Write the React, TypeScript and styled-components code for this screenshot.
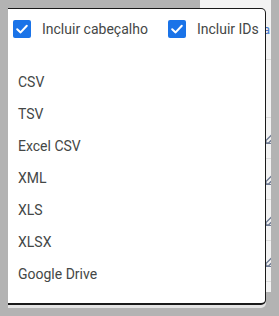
import styled, { createGlobalStyle } from 'styled-components'

const formats = ['CSV', 'TSV', 'Excel CSV', 'XML', 'XLS', 'XLSX', 'Google Drive']

const GlobalStyle = createGlobalStyle`
  * { box-sizing: border-box; }
  body {
    margin: 0;
    padding: 0;
    background: #b3b3b3;
    font-family: Roboto, "Liberation Sans", Arial, sans-serif;
  }
`

function CheckBox() {
  return (
    <Box>
      <svg width="14" height="14" viewBox="0 0 14 14">
        <path d="M2.2 7.2 L5.6 10.4 L11.8 3.8" fill="none" stroke="#fff" strokeWidth="2" strokeLinecap="round" strokeLinejoin="round" />
      </svg>
    </Box>
  )
}

function EditIcon() {
  return (
    <svg width="12" height="12" viewBox="0 0 12 12">
      <path d="M1 11 L1 8.5 L8 1.5 L10.5 4 L3.5 11 Z" fill="none" stroke="#6e7a92" strokeWidth="1.3" />
      <path d="M0.5 11.5 H11.5" stroke="#6e7a92" strokeWidth="1" />
    </svg>
  )
}

function App() {
  return (
    <Page>
      <GlobalStyle />

      {/* table behind the menu, only a thin strip of it shows */}
      <Sheet>
        <SheetHead>
          <HeadLink>a</HeadLink>
        </SheetHead>
        <SheetRow $tall />
        {[0, 1, 2, 3].map((i) => (
          <SheetRow key={i}>
            <EditIcon />
          </SheetRow>
        ))}
      </Sheet>

      <Menu>
        <Header>
          <Option>
            <CheckBox />
            <span>Incluir cabeçalho</span>
          </Option>
          <Option>
            <CheckBox />
            <span>Incluir IDs</span>
          </Option>
        </Header>

        <List>
          {formats.map((f) => (
            <Item key={f}>{f}</Item>
          ))}
        </List>
      </Menu>
    </Page>
  )
}

const Page = styled.div`
  position: relative;
  width: 279px;
  height: 316px;
  overflow: hidden;
  background: #b3b3b3;
`

const Sheet = styled.div`
  margin-left: 200px;
  width: 71px;
  height: 292px;
  background: #f3f3f3;
  overflow: hidden;
  display: flex;
  flex-direction: column;
`

const SheetHead = styled.div`
  height: 60px;
  border-bottom: 1px solid #dcdcdc;
  display: flex;
  justify-content: flex-end;
  padding-top: 22px;
  padding-right: 1px;
`

const HeadLink = styled.span`
  font-size: 13px;
  color: #4a78c8;
`

const SheetRow = styled.div<{ $tall?: boolean }>`
  height: ${(p) => (p.$tall ? '58px' : '41px')};
  flex-shrink: 0;
  border-bottom: 1px solid #dcdcdc;
  display: flex;
  align-items: center;
  justify-content: flex-end;
  margin-right: -6px;
`

const Menu = styled.div`
  position: absolute;
  left: 8px;
  top: 8px;
  width: 258px;
  height: 297px;
  background: #fff;
  border-top: 1px solid #1a1a1a;
  border-right: 1.5px solid #1a1a1a;
  border-bottom: 2px solid #1a1a1a;
  border-radius: 0 5px 5px 0;
  box-shadow: 0 3px 0 #e4e4e4;
  display: flex;
  flex-direction: column;
`

const Header = styled.div`
  height: 40px;
  display: flex;
  align-items: center;
  gap: 20px;
  padding-left: 5px;
`

const Option = styled.label`
  display: flex;
  align-items: center;
  gap: 11px;
  font-size: 14px;
  color: #444746;
  white-space: nowrap;
`

const Box = styled.span`
  width: 18px;
  height: 18px;
  border-radius: 2px;
  background: #1a73e8;
  display: flex;
  align-items: center;
  justify-content: center;
`

const List = styled.div`
  margin-top: 17px;
  display: flex;
  flex-direction: column;
`

const Item = styled.div`
  height: 32px;
  display: flex;
  align-items: center;
  padding-left: 10px;
  font-size: 14px;
  color: #444746;
`

export default App
